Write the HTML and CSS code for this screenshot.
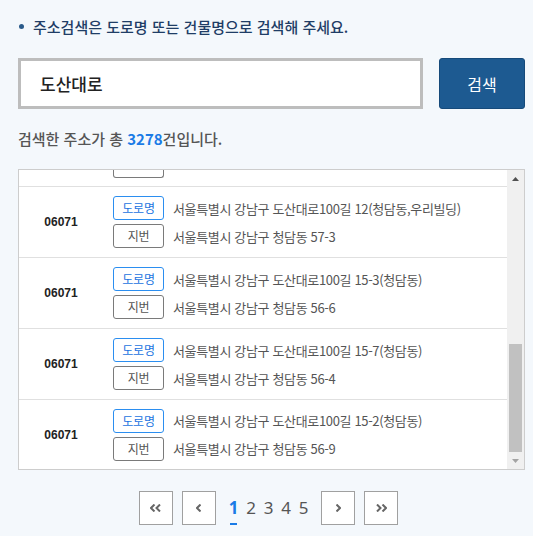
FILE: index.html
```html
<!DOCTYPE html>
<html lang="ko">
<head>
<meta charset="utf-8">
<title>주소검색</title>
<link rel="stylesheet" href="styles.css">
</head>
<body>
<div class="page">
  <p class="guide"><span class="dot"></span>주소검색은 도로명 또는 건물명으로 검색해 주세요.</p>
  <div class="search">
    <input class="field" type="text" value="도산대로">
    <button class="btn" type="button">검색</button>
  </div>
  <p class="count">검색한 주소가 총 <strong>3278</strong>건입니다.</p>
  <div class="list">
    <div class="viewport">
      <ul class="rows">
        <li class="row partial">
          <span class="code-space"></span>
          <span class="tag-edge"></span>
        </li>
        <li class="row">
          <span class="code">06071</span>
          <div class="lines">
            <div class="line"><span class="tag road">도로명</span><span class="addr">서울특별시 강남구 도산대로100길 12(청담동,우리빌딩)</span></div>
            <div class="line"><span class="tag lot">지번</span><span class="addr">서울특별시 강남구 청담동 57-3</span></div>
          </div>
        </li>
        <li class="row">
          <span class="code">06071</span>
          <div class="lines">
            <div class="line"><span class="tag road">도로명</span><span class="addr">서울특별시 강남구 도산대로100길 15-3(청담동)</span></div>
            <div class="line"><span class="tag lot">지번</span><span class="addr">서울특별시 강남구 청담동 56-6</span></div>
          </div>
        </li>
        <li class="row">
          <span class="code">06071</span>
          <div class="lines">
            <div class="line"><span class="tag road">도로명</span><span class="addr">서울특별시 강남구 도산대로100길 15-7(청담동)</span></div>
            <div class="line"><span class="tag lot">지번</span><span class="addr">서울특별시 강남구 청담동 56-4</span></div>
          </div>
        </li>
        <li class="row last">
          <span class="code">06071</span>
          <div class="lines">
            <div class="line"><span class="tag road">도로명</span><span class="addr">서울특별시 강남구 도산대로100길 15-2(청담동)</span></div>
            <div class="line"><span class="tag lot">지번</span><span class="addr">서울특별시 강남구 청담동 56-9</span></div>
          </div>
        </li>
      </ul>
    </div>
    <div class="scrollbar">
      <div class="sb-btn"><svg width="7" height="4" viewBox="0 0 7 4"><polygon points="0,4 3.5,0 7,4" fill="#505050"/></svg></div>
      <div class="track"><div class="thumb"></div></div>
      <div class="sb-btn"><svg width="7" height="4" viewBox="0 0 7 4"><polygon points="0,0 7,0 3.5,4" fill="#a3a3a3"/></svg></div>
    </div>
  </div>
  <nav class="pager">
    <a class="pg" href="#"><svg width="11" height="8" viewBox="0 0 11 8"><polyline points="4.5,0.5 1,4 4.5,7.5" fill="none" stroke="#666" stroke-width="2"/><polyline points="10,0.5 6.5,4 10,7.5" fill="none" stroke="#666" stroke-width="2"/></svg></a>
    <a class="pg" href="#"><svg width="5" height="8" viewBox="0 0 5 8"><polyline points="4.5,0.5 1,4 4.5,7.5" fill="none" stroke="#666" stroke-width="2"/></svg></a>
    <div class="nums">
      <a class="num on" href="#">1</a>
      <a class="num" href="#">2</a>
      <a class="num" href="#">3</a>
      <a class="num" href="#">4</a>
      <a class="num" href="#">5</a>
    </div>
    <a class="pg" href="#"><svg width="5" height="8" viewBox="0 0 5 8"><polyline points="0.5,0.5 4,4 0.5,7.5" fill="none" stroke="#666" stroke-width="2"/></svg></a>
    <a class="pg" href="#"><svg width="11" height="8" viewBox="0 0 11 8"><polyline points="1,0.5 4.5,4 1,7.5" fill="none" stroke="#666" stroke-width="2"/><polyline points="6.5,0.5 10,4 6.5,7.5" fill="none" stroke="#666" stroke-width="2"/></svg></a>
  </nav>
</div>
</body>
</html>
```

FILE: styles.css
```css
html, body {
  margin: 0;
  background: #f4f8fc;
  font-family: "Noto Sans CJK KR", "Noto Sans", sans-serif;
}

.page {
  width: 507px;
  padding: 16px 8px 0 18px;
}

.guide {
  margin: 0;
  display: flex;
  align-items: center;
  font-size: 15px;
  line-height: 21px;
  font-weight: 500;
  color: #1f3d66;
}

.dot {
  width: 5px;
  height: 5px;
  border-radius: 50%;
  background: #2a5a8a;
  margin: 0 9px 0 1px;
}

.search {
  display: flex;
  gap: 16px;
  height: 51px;
  margin-top: 21px;
}

.field {
  width: 405px;
  box-sizing: border-box;
  margin: 0;
  border: 3px solid #bdbdbd;
  padding: 0 0 0 19px;
  background: #fff;
  font-family: "Noto Sans CJK KR", "Noto Sans", sans-serif;
  font-size: 17px;
  font-weight: 500;
  color: #222;
  outline: none;
}

.btn {
  width: 86px;
  margin: 0;
  background: #1d5a91;
  border: 1px solid #164a7a;
  border-radius: 3px;
  color: #fff;
  font-family: "Noto Sans CJK KR", "Noto Sans", sans-serif;
  font-size: 16px;
}

.count {
  margin: 19px 0 0;
  font-size: 15px;
  line-height: 21px;
  font-weight: 500;
  color: #555;
}

.count strong {
  color: #1a7be6;
  font-weight: 700;
}

.list {
  display: flex;
  height: 301px;
  box-sizing: border-box;
  margin-top: 20px;
  border: 1px solid #cdcdcd;
  background: #fff;
}

.viewport {
  flex: 1;
  overflow: hidden;
}

.rows {
  margin: 0;
  padding: 0;
  list-style: none;
}

.row {
  display: flex;
  align-items: center;
  height: 70px;
  border-bottom: 1px solid #e0e0e0;
}

.row.partial {
  height: 16px;
  align-items: flex-start;
}

.row.last {
  height: 69px;
  border-bottom: 0;
}

.code-space {
  width: 84px;
  margin-right: 10px;
}

.tag-edge {
  width: 51px;
  height: 8px;
  box-sizing: border-box;
  border: 1px solid #7a7a7a;
  border-top: 0;
  border-radius: 0 0 3px 3px;
}

.code {
  width: 84px;
  margin-right: 10px;
  text-align: center;
  font-family: "Liberation Sans", Arial, sans-serif;
  font-size: 12px;
  font-weight: 700;
  color: #222;
}

.lines {
  display: flex;
  flex-direction: column;
  gap: 4px;
}

.line {
  display: flex;
  align-items: center;
  gap: 9px;
}

.tag {
  width: 51px;
  height: 24px;
  box-sizing: border-box;
  border: 1px solid;
  border-radius: 3px;
  text-align: center;
  font-size: 12px;
  line-height: 22px;
  letter-spacing: -0.2px;
}

.tag.road {
  border-color: #2b8ef0;
  color: #1a73e0;
}

.tag.lot {
  border-color: #7a7a7a;
  color: #555;
}

.addr {
  font-size: 13px;
  letter-spacing: -0.35px;
  color: #555;
}

.scrollbar {
  width: 17px;
  display: flex;
  flex-direction: column;
  background: #f0f0f0;
}

.sb-btn {
  height: 17px;
  display: flex;
  align-items: center;
  justify-content: center;
}

.track {
  flex: 1;
  display: flex;
  flex-direction: column;
  justify-content: flex-end;
}

.thumb {
  height: 108px;
  margin: 0 2px;
  background: #c1c1c1;
}

.pager {
  display: flex;
  justify-content: center;
  gap: 9px;
  margin-top: 21px;
  padding-right: 6px;
}

.pg {
  width: 34px;
  height: 34px;
  box-sizing: border-box;
  border: 1px solid #a0a0a0;
  background: #fff;
  display: flex;
  align-items: center;
  justify-content: center;
}

.nums {
  display: flex;
}

.num {
  position: relative;
  width: 17.5px;
  text-align: center;
  font-family: "Noto Sans", sans-serif;
  font-size: 17px;
  line-height: 34px;
  color: #555;
  text-decoration: none;
}

.num.on {
  color: #1a7be6;
  font-weight: 700;
}

.num.on::after {
  content: "";
  position: absolute;
  left: 5px;
  bottom: 0;
  width: 7px;
  height: 2px;
  background: #1a7be6;
}
```
